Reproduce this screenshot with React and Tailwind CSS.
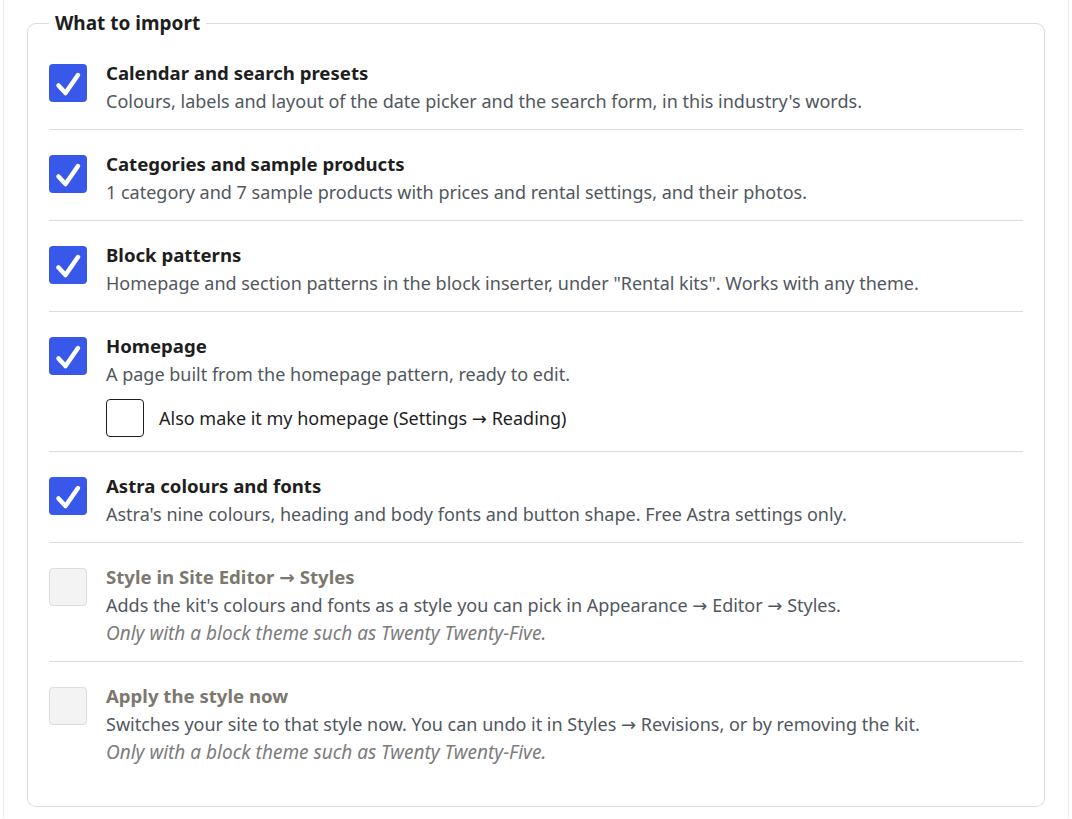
import { useState } from 'react';

const items = [
  {
    key: 'calendar',
    title: 'Calendar and search presets',
    description: "Colours, labels and layout of the date picker and the search form, in this industry's words.",
    checked: true,
  },
  {
    key: 'products',
    title: 'Categories and sample products',
    description: '1 category and 7 sample products with prices and rental settings, and their photos.',
    checked: true,
  },
  {
    key: 'patterns',
    title: 'Block patterns',
    description: 'Homepage and section patterns in the block inserter, under "Rental kits". Works with any theme.',
    checked: true,
  },
  {
    key: 'homepage',
    title: 'Homepage',
    description: 'A page built from the homepage pattern, ready to edit.',
    checked: true,
    sub: 'Also make it my homepage (Settings → Reading)',
  },
  {
    key: 'astra',
    title: 'Astra colours and fonts',
    description: "Astra's nine colours, heading and body fonts and button shape. Free Astra settings only.",
    checked: true,
  },
  {
    key: 'style',
    title: 'Style in Site Editor → Styles',
    description: "Adds the kit's colours and fonts as a style you can pick in Appearance → Editor → Styles.",
    note: 'Only with a block theme such as Twenty Twenty-Five.',
    disabled: true,
  },
  {
    key: 'apply',
    title: 'Apply the style now',
    description: 'Switches your site to that style now. You can undo it in Styles → Revisions, or by removing the kit.',
    note: 'Only with a block theme such as Twenty Twenty-Five.',
    disabled: true,
  },
];

// Noto Sans draws a tiny arrow, so borrow DejaVu's for it
function WithArrows({ text }) {
  const parts = text.split('→');
  return parts.map((part, i) => (
    <span key={i}>
      {part}
      {i < parts.length - 1 ? <span className="font-['DejaVu_Sans',sans-serif] leading-none">→</span> : null}
    </span>
  ));
}

function Box({ checked, disabled, onClick, className = 'mt-[5px]' }) {
  if (disabled) {
    return <span className={`${className} block h-[38px] w-[38px] shrink-0 rounded-[4px] border border-[#dcdcde] bg-[#f3f3f3]`} />;
  }
  return (
    <button
      type="button"
      onClick={onClick}
      className={`${className} flex h-[38px] w-[38px] shrink-0 items-center justify-center rounded-[4px] ${
        checked ? 'bg-[#3858e9]' : 'border border-[#1e1e1e] bg-white'
      }`}
    >
      {checked ? (
        <svg viewBox="0 0 38 38" className="h-[38px] w-[38px]">
          <path d="M9.5 21.5 L16.5 29 L29 11" fill="none" stroke="white" strokeWidth="4.5" strokeLinecap="round" strokeLinejoin="round" />
        </svg>
      ) : null}
    </button>
  );
}

export default function App() {
  const [state, setState] = useState(() => Object.fromEntries(items.map((item) => [item.key, !!item.checked])));
  const [makeHome, setMakeHome] = useState(false);

  return (
    <div className="min-h-[819px] bg-white px-[3px] font-['Noto_Sans',sans-serif]">
      <div className="border-x border-[#ececec] px-[23px] pb-[11px] pt-[11px]">
        <fieldset className="rounded-[9px] border border-[#dcdcde] px-[21px] pb-[26px] pt-[4px]">
          <legend className="px-[6px] text-[19px] font-bold leading-[24px] text-[#1e1e1e]">What to import</legend>
          {items.map((item, index) => (
            <div
              key={item.key}
              className={`flex gap-[19px] pb-[14px] pt-[20px] ${index < items.length - 1 ? 'border-b border-[#dcdcde]' : ''}`}
            >
              <Box
                checked={state[item.key]}
                disabled={item.disabled}
                onClick={() => setState((current) => ({ ...current, [item.key]: !current[item.key] }))}
              />
              <div className="min-w-0">
                <div className={`text-[18.6px] font-bold leading-[28px] ${item.disabled ? 'text-[#7d786f]' : 'text-[#1e1e1e]'}`}>
                  <WithArrows text={item.title} />
                </div>
                <div className="text-[18px] leading-[28px] text-[#50575e]">
                  <WithArrows text={item.description} />
                </div>
                {item.note ? <div className="text-[19px] italic leading-[28px] text-[#7c7c7c]">{item.note}</div> : null}
                {item.sub ? (
                  <label className="mt-[11px] flex items-center gap-[15px]">
                    <Box className="mt-0" checked={makeHome} onClick={() => setMakeHome((v) => !v)} />
                    <span className="text-[18px] leading-[28px] text-[#1e1e1e]">
                      <WithArrows text={item.sub} />
                    </span>
                  </label>
                ) : null}
              </div>
            </div>
          ))}
        </fieldset>
      </div>
    </div>
  );
}
